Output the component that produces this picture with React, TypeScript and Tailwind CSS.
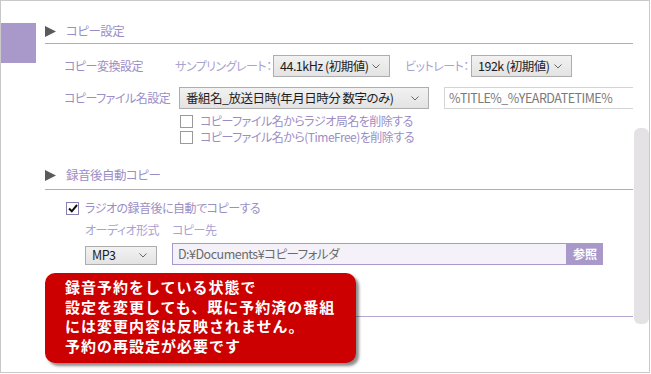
import React from "react";

const Chevron = () => (
  <svg width="8" height="5" viewBox="0 0 8 5" className="shrink-0">
    <path d="M0.5 0.5 L4 4 L7.5 0.5" fill="none" stroke="#666" strokeWidth="1" />
  </svg>
);

const Triangle = () => (
  <svg width="11" height="11" viewBox="0 0 11 11" className="shrink-0">
    <polygon points="0,0 11,5.5 0,11" fill="#5a5a5a" />
  </svg>
);

function Select({ className, text }: { className: string; text: string }) {
  return (
    <div
      className={
        "shrink-0 flex items-center justify-between border border-[#adadad] bg-gradient-to-b from-[#f2f2f2] to-[#e3e3e3] pl-[6px] pr-[9px] text-[12.5px] text-[#1e1e1e] " +
        className
      }
    >
      <span className="whitespace-nowrap">{text}</span>
      <Chevron />
    </div>
  );
}

function Check({ checked }: { checked?: boolean }) {
  return (
    <div
      className={
        checked
          ? "w-[13px] h-[13px] border border-[#8a80b0] bg-white flex items-center justify-center shrink-0"
          : "w-[13px] h-[13px] border border-[#9a9a9a] bg-white shrink-0"
      }
    >
      {checked && (
        <svg width="10" height="9" viewBox="0 0 10 9">
          <path d="M1 4.5 L3.8 7.3 L9 1" fill="none" stroke="#111" strokeWidth="2" />
        </svg>
      )}
    </div>
  );
}

export default function App() {
  return (
    <div className="w-[650px] h-[373px] border border-[#c9c9c9] relative bg-white overflow-hidden font-['Noto_Sans_CJK_JP',sans-serif] [font-feature-settings:'palt'] text-[12px] tracking-[-0.5px] leading-none">
      <div className="flex">
        <div className="w-[35px] shrink-0 pt-[22px]">
          <div className="h-[40px] bg-[#a899ca]" />
        </div>
        <div className="ml-[9px] w-[588px] pt-[22px]">
          {/* Section 1 */}
          <div className="h-[21px] flex items-center pb-[3px] border-b border-[#b4a6d6]">
            <Triangle />
            <span className="ml-[10px] text-[12.5px] text-[#9b8ec6]">コピー設定</span>
          </div>

          <div className="mt-[11px] h-[22px] flex items-center pl-[19px]">
            <span className="w-[111px] shrink-0 text-[#9b8ec6] whitespace-nowrap">コピー変換設定</span>
            <span className="w-[98px] shrink-0 text-[#aaa2cf] whitespace-nowrap">サンプリングレート：</span>
            <Select className="w-[117px] h-[22px]" text="44.1kHz (初期値)" />
            <span className="ml-[15px] w-[66px] shrink-0 text-[#aaa2cf] whitespace-nowrap">ビットレート：</span>
            <Select className="w-[101px] h-[22px]" text="192k (初期値)" />
          </div>

          <div className="mt-[10px] h-[22px] flex items-center pl-[19px]">
            <span className="w-[115px] shrink-0 text-[#9b8ec6] whitespace-nowrap">コピーファイル名設定</span>
            <Select className="w-[250px] h-[22px]" text="番組名_放送日時(年月日時分 数字のみ)" />
            <div className="ml-[15px] flex-1 h-[22px] border border-[#d4d4d4] border-r-0 flex items-center pl-[4px] text-[12.5px] text-[#7a7a7a] whitespace-nowrap">
              %TITLE%_%YEARDATETIME%
            </div>
          </div>

          <div className="mt-[4px] pl-[135px]">
            <div className="h-[16px] flex items-center">
              <Check />
              <span className="ml-[7px] text-[#9b8ec6] whitespace-nowrap">コピーファイル名からラジオ局名を削除する</span>
            </div>
            <div className="h-[16px] flex items-center">
              <Check />
              <span className="ml-[7px] text-[#9b8ec6] whitespace-nowrap">コピーファイル名から(TimeFree)を削除する</span>
            </div>
          </div>

          {/* Section 2 */}
          <div className="mt-[23px] h-[22px] flex items-center pb-[6px] border-b border-[#b4a6d6]">
            <Triangle />
            <span className="ml-[10px] text-[12.5px] text-[#9b8ec6]">録音後自動コピー</span>
          </div>

          <div className="mt-[11px] h-[14px] flex items-center pl-[21px]">
            <Check checked />
            <span className="ml-[6px] text-[#9b8ec6] whitespace-nowrap">ラジオの録音後に自動でコピーする</span>
          </div>

          <div className="mt-[6px] h-[18px] flex items-center pl-[40px] text-[#aaa2cf]">
            <span className="w-[87px] shrink-0 whitespace-nowrap">オーディオ形式</span>
            <span className="whitespace-nowrap">コピー先</span>
          </div>

          <div className="mt-[4px] h-[22px] flex items-end pl-[40px]">
            <Select className="w-[72px] h-[19px]" text="MP3" />
            <div className="ml-[15px] w-[395px] shrink-0 h-[22px] border border-[#a899ca] bg-[#f4f2f8] flex items-center pl-[5px] text-[12.5px] text-[#6a6a6a] whitespace-nowrap">
              D:¥Documents¥コピーフォルダ
            </div>
            <div className="w-[36px] shrink-0 h-[22px] bg-[#a899ca] flex items-center justify-center text-white font-bold text-[12px] tracking-normal">
              参照
            </div>
          </div>

          <div className="mt-[51px] h-px bg-[#b4a6d6]" />
        </div>
      </div>

      {/* scrollbar */}
      <div className="absolute left-[633px] top-[127px] w-[15px] h-[196px] rounded-[6px] bg-[#e4e2e4]" />

      {/* red callout */}
      <div className="absolute left-[44px] top-[272px] w-[311px] h-[90px] rounded-[10px] bg-[#cc0000] shadow-[3px_3px_3px_rgba(0,0,0,0.45)] pl-[20px] pt-[4px] text-white font-bold text-[15px] tracking-[1px] leading-[19.5px] [font-feature-settings:normal]">
        <div>録音予約をしている状態で</div>
        <div>設定を変更しても、既に予約済の番組</div>
        <div>には変更内容は反映されません。</div>
        <div>予約の再設定が必要です</div>
      </div>
    </div>
  );
}
